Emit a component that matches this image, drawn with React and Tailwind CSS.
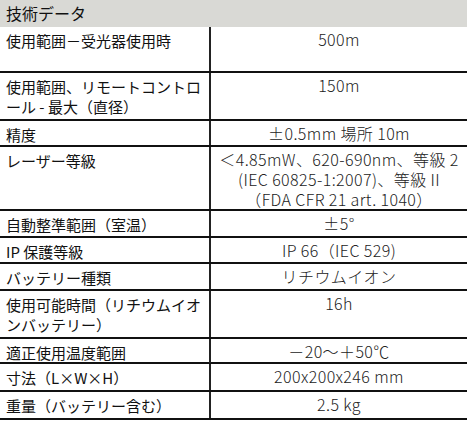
import React from 'react';

const rows = [
  { h: 'h-[46px]', label: '使用範囲－受光器使用時', value: ['500m'] },
  { h: 'h-[48px]', label: ['使用範囲、リモートコントロ', 'ール - 最大（直径）'], value: ['150m'] },
  { h: 'h-[26px]', label: '精度', value: ['±0.5mm 場所 10m'] },
  {
    h: 'h-[64px]',
    label: 'レーザー等級',
    value: ['＜4.85mW、620-690nm、等級 2', '(IEC 60825-1:2007)、等級 II', '（FDA CFR 21 art. 1040）'],
  },
  { h: 'h-[27px]', label: '自動整準範囲（室温）', value: ['±5°'] },
  { h: 'h-[26px]', label: 'IP 保護等級', value: ['IP 66（IEC 529)'] },
  { h: 'h-[27px]', label: 'バッテリー種類', value: ['リチウムイオン'] },
  { h: 'h-[48px]', label: ['使用可能時間（リチウムイオ', 'ンバッテリー）'], value: ['16h'] },
  { h: 'h-[25px]', label: '適正使用温度範囲', value: ['－20～＋50℃'] },
  { h: 'h-[28px]', label: '寸法（L×W×H）', value: ['200x200x246 mm'] },
  { h: 'h-[28px]', label: '重量（バッテリー含む）', value: ['2.5 kg'] },
];

const lines = (arr) =>
  arr.map((l, j) => (
    <React.Fragment key={j}>
      {j > 0 && <br />}
      {l}
    </React.Fragment>
  ));

export default function App() {
  return (
    <div className="w-[471px] h-[428px] bg-white" style={{ fontFamily: '"Noto Sans CJK JP", "Noto Sans", sans-serif' }}>
      <div className="w-[467px]">
        {/* Header */}
        <div className="h-[27px] bg-[#d9d9d5] px-[6px] pt-[2px] text-[16px] leading-[22px] text-[#111]">
          技術データ
        </div>

        {rows.map((r, i) => (
          <div key={i} className={`grid grid-cols-[211px_1fr] border-b-2 border-[#111] ${r.h}`}>
            <div className="border-r-2 border-[#222] pl-[6px] pt-[4px] text-[15px] leading-[20px] text-[#111] whitespace-nowrap">
              {Array.isArray(r.label) ? lines(r.label) : r.label}
            </div>
            <div className="pt-[2px] text-center text-[16px] leading-[20px] tracking-[0.4px] font-light text-[#222] whitespace-nowrap">
              {lines(r.value)}
            </div>
          </div>
        ))}
      </div>
    </div>
  );
}
